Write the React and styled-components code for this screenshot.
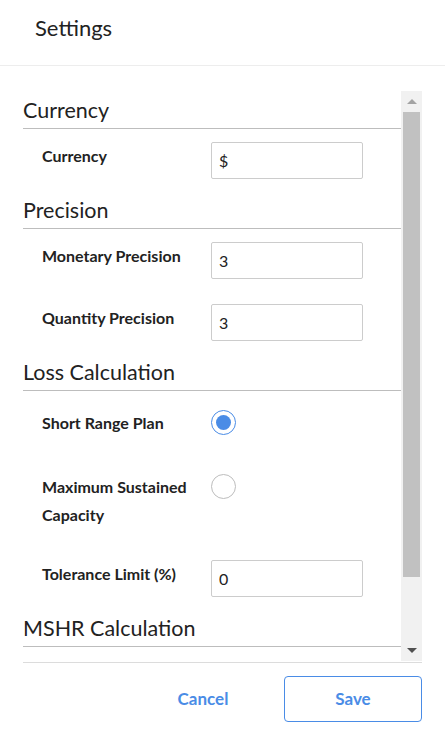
import React, { useState } from 'react';
import styled, { createGlobalStyle } from 'styled-components';

const GlobalStyle = createGlobalStyle`
    html, body {
        margin: 0;
        padding: 0;
        background: #ffffff;
    }
    body {
        font-family: Lato, "Open Sans", "Noto Sans", sans-serif;
        color: #222222;
    }
    * { box-sizing: border-box; }
`;

const blue = '#4a8ce6';

const StyledPage = styled.div`
    width: 445px;
    height: 734px;
    display: flex;
    flex-direction: column;
    background: #fff;
`;

const StyledHeader = styled.div`
    height: 66px;
    display: flex;
    align-items: center;
    padding: 0 0 10px 35px;
    font-size: 22px;
    color: #222;
    border-bottom: 1px solid #ededed;
`;

const StyledBody = styled.div`
    display: flex;
    margin: 25px 23px 0 23px;
    height: 572px;
    border-bottom: 1px solid #dcdcdc;
`;

const StyledContent = styled.div`
    flex: 1;
    overflow: hidden;
    padding-top: 5px;
`;

const StyledScrollbar = styled.div`
    width: 21px;
    background: #f1f1f1;
    display: flex;
    flex-direction: column;
    align-items: center;
    margin-bottom: 1px;
`;

const StyledArrow = styled.div`
    width: 21px;
    height: 21px;
    display: flex;
    align-items: center;
    justify-content: center;
    &::before {
        content: '';
        width: 0;
        height: 0;
        border-left: 5px solid transparent;
        border-right: 5px solid transparent;
        ${({ down }) => down
            ? 'border-top: 5px solid #505050;'
            : 'border-bottom: 5px solid #a3a3a3;'}
    }
`;

const StyledThumb = styled.div`
    width: 17px;
    height: 465px;
    background: #c1c1c1;
`;

const StyledTrack = styled.div`flex: 1;`;

const StyledHeading = styled.div`
    font-size: 21.5px;
    line-height: 28px;
    padding-bottom: 4px;
    margin-top: ${({ first }) => first ? '0' : '17px'};
    border-bottom: 1px solid #bdbdbd;
    color: #222;
`;

const StyledRow = styled.div`
    display: grid;
    grid-template-columns: 169px 152px;
    padding-left: 19px;
    margin-top: ${({ gap }) => gap}px;
    min-height: ${({ min }) => min || 0}px;
`;

const StyledLabel = styled.div`
    font-size: 16px;
    font-weight: 700;
    line-height: 28px;
    color: #222;
`;

const StyledInput = styled.input`
    width: 152px;
    height: 37px;
    border: 1px solid #cccccc;
    border-radius: 2px;
    padding: 0 7px;
    font-family: inherit;
    font-size: 16px;
    color: #222;
    outline: none;
`;

const StyledRadio = styled.button`
    width: 25px;
    height: 25px;
    margin-top: 1px;
    padding: 0;
    border-radius: 50%;
    border: 1px solid ${({ checked }) => checked ? blue : '#bdbdbd'};
    background: #fff;
    display: flex;
    align-items: center;
    justify-content: center;
    cursor: pointer;
    &::after {
        content: '';
        width: 15px;
        height: 15px;
        border-radius: 50%;
        background: ${({ checked }) => checked ? blue : 'transparent'};
    }
`;

const StyledFooter = styled.div`
    display: flex;
    justify-content: flex-end;
    gap: 12px;
    padding: 13px 23px 0 0;
`;

const StyledButton = styled.button`
    width: 138px;
    height: 46px;
    border-radius: 4px;
    border: 1px solid ${({ outlined }) => outlined ? blue : 'transparent'};
    background: #fff;
    color: ${blue};
    font-family: inherit;
    font-size: 17px;
    font-weight: 700;
    padding: 0 0 2px;
    cursor: pointer;
`;

const InputRow = ({ label, value, gap }) => (
    <StyledRow gap={gap} min={37}>
        <StyledLabel>{label}</StyledLabel>
        <StyledInput defaultValue={value} />
    </StyledRow>
);

const App = () => {
    const [plan, setPlan] = useState('short');

    return (
        <StyledPage>
            <GlobalStyle />
            <StyledHeader>Settings</StyledHeader>
            <StyledBody>
                <StyledContent>
                    <StyledHeading first>Currency</StyledHeading>
                    <InputRow label="Currency" value="$" gap={13} />

                    <StyledHeading>Precision</StyledHeading>
                    <InputRow label="Monetary Precision" value="3" gap={13} />
                    <InputRow label="Quantity Precision" value="3" gap={25} />

                    <StyledHeading>Loss Calculation</StyledHeading>
                    <StyledRow gap={18} min={37}>
                        <StyledLabel>Short Range Plan</StyledLabel>
                        <StyledRadio checked={plan === 'short'} onClick={() => setPlan('short')} />
                    </StyledRow>
                    <StyledRow gap={27}>
                        <StyledLabel>Maximum Sustained<br />Capacity</StyledLabel>
                        <StyledRadio checked={plan === 'max'} onClick={() => setPlan('max')} />
                    </StyledRow>
                    <InputRow label="Tolerance Limit (%)" value="0" gap={31} />

                    <StyledHeading>MSHR Calculation</StyledHeading>
                </StyledContent>
                <StyledScrollbar>
                    <StyledArrow />
                    <StyledThumb />
                    <StyledTrack />
                    <StyledArrow down />
                </StyledScrollbar>
            </StyledBody>
            <StyledFooter>
                <StyledButton>Cancel</StyledButton>
                <StyledButton outlined>Save</StyledButton>
            </StyledFooter>
        </StyledPage>
    );
};

export default App;
